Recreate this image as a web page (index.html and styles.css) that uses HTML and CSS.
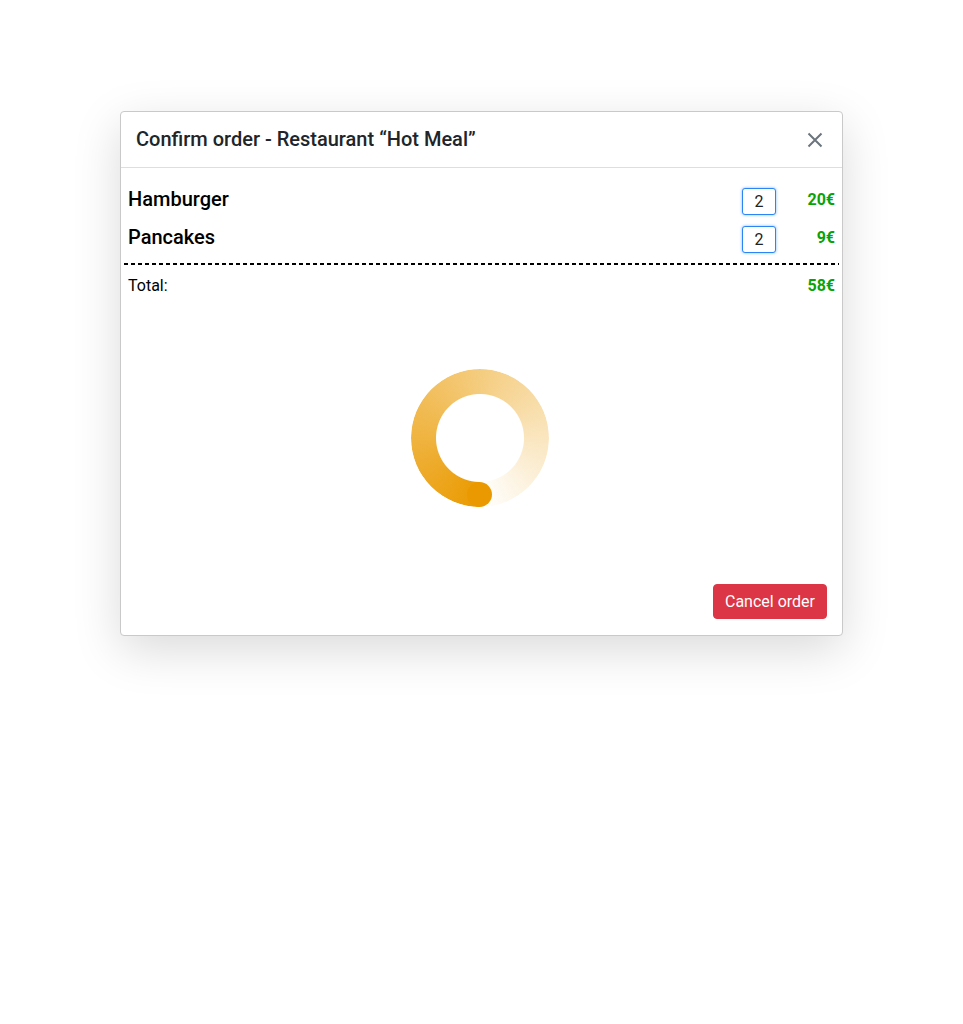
FILE: index.html
```html
<!DOCTYPE html>
<html lang="en">
<head>
<meta charset="utf-8">
<title>Confirm order</title>
<link rel="stylesheet" href="styles.css">
</head>
<body>
<div class="page">
<div class="modal">
  <div class="modal-header">
    <h5 class="modal-title">Confirm order - Restaurant “Hot Meal”</h5>
    <button class="close" aria-label="Close">
      <svg width="16" height="16" viewBox="0 0 16 16"><path d="M1.5 1.5 L14.5 14.5 M14.5 1.5 L1.5 14.5" stroke="#6c757d" stroke-width="2" fill="none" stroke-linecap="butt"/></svg>
    </button>
  </div>
  <div class="modal-body">
    <div class="item">
      <span class="item-name">Hamburger</span>
      <input class="qty" type="text" value="2">
      <span class="price">20€</span>
    </div>
    <div class="item">
      <span class="item-name">Pancakes</span>
      <input class="qty" type="text" value="2">
      <span class="price">9€</span>
    </div>
    <div class="divider"></div>
    <div class="total">
      <span class="total-label">Total:</span>
      <span class="total-price">58€</span>
    </div>
    <div class="spinner-wrap">
      <div class="spinner">
        <div class="ring"></div>
        <div class="cap"></div>
      </div>
    </div>
  </div>
  <div class="modal-footer">
    <button class="btn-cancel">Cancel order</button>
  </div>
</div>
</div>
</body>
</html>
```
FILE: styles.css
```css
* { box-sizing: border-box; }
html, body { margin: 0; padding: 0; background: #fff; }
body {
  font-family: Roboto, "Liberation Sans", Arial, sans-serif;
  color: #000;
}
.page {
  min-height: 1024px;
  padding-top: 111px;
}
.modal {
  width: 723px;
  margin: 0 auto;
  border: 1px solid #c9c9c9;
  border-radius: 4px;
  background: #fff;
  box-shadow: 0 14px 48px rgba(0, 0, 0, 0.15);
}
.modal-header {
  display: flex;
  align-items: center;
  justify-content: space-between;
  height: 56px;
  padding: 0 19px 2px 15px;
  border-bottom: 1px solid #dedede;
}
.modal-title {
  margin: 0;
  font-size: 20px;
  font-weight: 500;
  line-height: 24px;
  color: #212529;
}
.close {
  border: 0;
  background: none;
  padding: 0;
  margin: 2px 0 0 0;
  width: 16px;
  height: 16px;
  display: flex;
}
.modal-body {
  padding: 14px 3px 0;
  display: flex;
  flex-direction: column;
}
.item {
  display: flex;
  align-items: center;
  height: 38px;
  padding: 0 4px;
}
.item-name {
  flex: 1;
  font-size: 20px;
  font-weight: 500;
  line-height: 24px;
  margin-top: -5px;
}
.qty {
  width: 34px;
  height: 27px;
  border: 1px solid #2a86f5;
  border-radius: 3px;
  box-shadow: 0 0 3px rgba(0, 123, 255, 0.55);
  font-family: Roboto, "Liberation Sans", Arial, sans-serif;
  font-size: 16px;
  color: #222;
  text-align: center;
  padding: 0;
  outline: none;
}
.price, .total-price {
  width: 59px;
  text-align: right;
  font-size: 16px;
  font-weight: 700;
  color: #09a309;
}
.price { margin-top: -4px; }
.divider {
  height: 2px;
  margin-top: 5px;
  background: repeating-linear-gradient(to right, #000 0, #000 4px, transparent 4px, transparent 7px);
}
.total {
  display: flex;
  justify-content: space-between;
  align-items: center;
  padding: 0 4px;
  margin-top: 9px;
  font-size: 16px;
  line-height: 24px;
}
.total-label { color: #000; }
.spinner-wrap {
  display: flex;
  justify-content: center;
  margin-top: 71px;
}
.spinner {
  position: relative;
  width: 138px;
  height: 138px;
  margin-left: -4px;
}
.ring {
  width: 138px;
  height: 138px;
  border-radius: 50%;
  background: conic-gradient(from 180deg, rgba(234, 154, 0, 1) 0deg, rgba(234, 154, 0, 0) 360deg);
  -webkit-mask: radial-gradient(circle, transparent 43.5px, #000 44.5px);
  mask: radial-gradient(circle, transparent 43.5px, #000 44.5px);
}
.cap {
  position: absolute;
  left: 56.5px;
  top: 113px;
  width: 25px;
  height: 25px;
  border-radius: 50%;
  background: #ea9a00;
}
.modal-footer {
  display: flex;
  justify-content: flex-end;
  padding: 77px 15px 16px;
}
.btn-cancel {
  height: 35px;
  padding: 0 11px;
  border: 1px solid #dc3545;
  border-radius: 4px;
  background: #dc3545;
  color: #fff;
  font-family: Roboto, "Liberation Sans", Arial, sans-serif;
  font-size: 16px;
  line-height: 22px;
}
```
